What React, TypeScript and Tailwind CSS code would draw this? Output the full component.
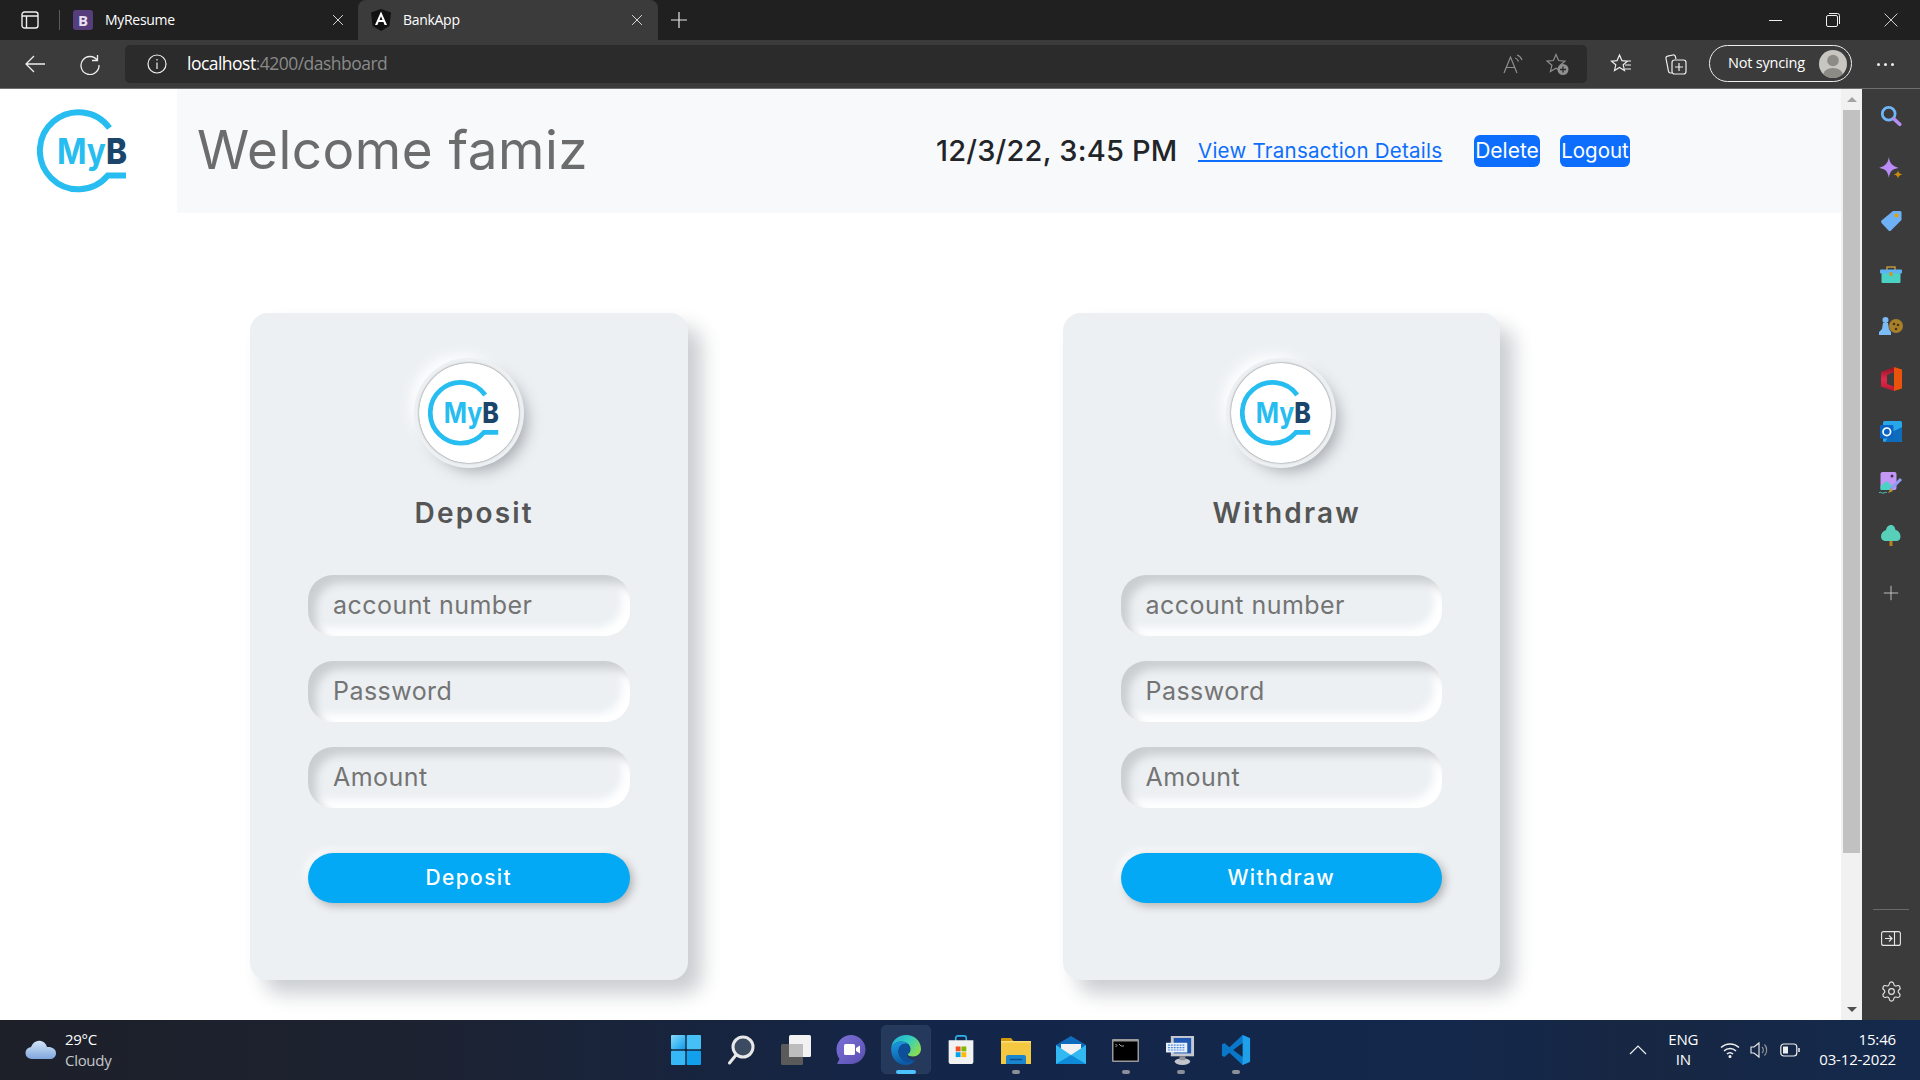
import React from "react";
import { Settings } from "lucide-react";

const SEGOE = "font-['Open_Sans','Noto_Sans',sans-serif]";
const POP = "font-['Inter','Liberation_Sans',sans-serif]";

function Logo({ className }: { className: string }) {
  return (
    <svg viewBox="0 0 90 90" className={className} fill="none">
      <path d="M72.5 19A38.5 38.5 0 1 0 70.8 66.5H89" stroke="#27bdf0" strokeWidth="6" />
      <text transform="translate(20 55) scale(.88 1)" x="0" y="0" fontSize="36" fontWeight="700" fontFamily="Inter">
        <tspan fill="#27bdf0">My</tspan>
        <tspan fill="#1b456b" fontWeight="800">B</tspan>
      </text>
    </svg>
  );
}

const Stroke = ({ children, size = 20, color = "#e8e8e8", sw = 1.3 }: { children: React.ReactNode; size?: number; color?: string; sw?: number }) => (
  <svg width={size} height={size} viewBox="0 0 20 20" fill="none" stroke={color} strokeWidth={sw}>{children}</svg>
);

function Tab({ active, icon, title, width, closeGap }: { active?: boolean; icon: React.ReactNode; title: string; width: string; closeGap: string }) {
  return (
    <div className={`flex h-10 shrink-0 items-center rounded-t-lg pl-[13px] ${width} ${active ? "bg-[#3b3b3b]" : ""}`}>
      <div className="flex w-5 justify-center">{icon}</div>
      <span className={`ml-[12px] flex-1 pb-[1px] text-[14px] tracking-[-0.3px] text-white ${SEGOE}`}>{title}</span>
      <span className={closeGap}>
        <Stroke size={14}><path d="M3 3l14 14M17 3L3 17" /></Stroke>
      </span>
    </div>
  );
}

function ToolBtn({ w, children }: { w: string; children: React.ReactNode }) {
  return <div className={`flex shrink-0 items-center justify-center ${w}`}>{children}</div>;
}

function BrowserChrome() {
  return (
    <>
      <div className="flex h-10 items-center bg-[#202020]">
        <div className="flex w-[59px] justify-center">
          <svg width="18" height="18" viewBox="0 0 18 18" fill="none" stroke="#eee" strokeWidth="1.4">
            <rect x="1" y="1" width="16" height="16" rx="2.5" />
            <path d="M1 5h16M5.5 5v12" />
          </svg>
        </div>
        <div className="h-[20px] w-px bg-[#5a5a5a]" />
        <Tab
          title="MyResume"
          width="w-[298px]"
          closeGap="mr-[13px]"
          icon={<div className={`flex h-5 w-5 items-center justify-center rounded-[3px] bg-[#563d7c] text-[15px] font-bold text-[#e8e0f0] ${SEGOE}`}>B</div>}
        />
        <Tab
          active
          title="BankApp"
          width="w-[300px]"
          closeGap="mr-[14px]"
          icon={
            <svg width="20" height="22" viewBox="0 0 20 22">
              <path d="M10 0L0 3.5 1.6 17 10 22l8.4-5L20 3.5z" fill="#111" />
              <path d="M10 2.5L4 16h2.4l1.2-3h4.8l1.2 3H16zM8.5 11L10 7.2 11.5 11z" fill="#fff" />
            </svg>
          }
        />
        <div className="ml-[11px]">
          <Stroke size={20} sw={1.2}><path d="M10 2v16M2 10h16" /></Stroke>
        </div>
        <div className="ml-auto flex items-center">
          <ToolBtn w="w-[57px]"><div className="h-px w-[13px] bg-[#eee]" /></ToolBtn>
          <ToolBtn w="w-[58px]">
            <svg width="14" height="14" viewBox="0 0 14 14" fill="none" stroke="#eee" strokeWidth="1">
              <rect x=".5" y="2.5" width="11" height="11" rx="1.5" />
              <path d="M3 .5h8.5a2 2 0 0 1 2 2V11" />
            </svg>
          </ToolBtn>
          <ToolBtn w="w-[58px]"><Stroke size={16} sw={1.1}><path d="M2 2l16 16M18 2L2 18" /></Stroke></ToolBtn>
        </div>
      </div>
      <div className="flex h-[49px] border-b border-[#6e6e6e] bg-[#3b3b3b] pt-[5px]">
        <div className="flex h-[38px] w-[125px] shrink-0 items-center">
          <ToolBtn w="w-[70px]">
            <svg width="22" height="22" viewBox="0 0 22 22" fill="none" stroke="#eee" strokeWidth="1.3">
              <path d="M21 11H2M10 3l-8 8 8 8" />
            </svg>
          </ToolBtn>
          <ToolBtn w="w-[40px]">
            <svg width="22" height="22" viewBox="0 0 22 22" fill="none" stroke="#eee" strokeWidth="1.3">
              <path d="M18.500 7.500A9 9 0 1 0 20 12M18.500 2v5.500H13" />
            </svg>
          </ToolBtn>
        </div>
        <div className="flex h-[38px] w-[1462px] shrink-0 items-center rounded-[5px] bg-[#2b2b2b]">
          <div className="flex w-[63px] justify-center">
            <svg width="20" height="20" viewBox="0 0 20 20" fill="none" stroke="#eee" strokeWidth="1.2">
              <circle cx="10" cy="10" r="9" />
              <path d="M10 8.5V15M10 5v1.6" />
            </svg>
          </div>
          <span className={`-ml-[1px] pb-[1px] text-[17.5px] tracking-[-0.52px] text-white ${SEGOE}`}>
            localhost<span className="text-[#8a8a8a]">:4200/dashboard</span>
          </span>
          <div className="ml-auto flex items-center pr-[7px]">
            <ToolBtn w="w-[45px]">
              <svg width="22" height="22" viewBox="0 0 22 22" fill="none" stroke="#8f8f8f" strokeWidth="1.2">
                <path d="M2 20L8.5 4 15 20M4.5 14.5h8M13 5a5 5 0 0 1 3.500 3.500M15 2a8 8 0 0 1 5 5" />
              </svg>
            </ToolBtn>
            <ToolBtn w="w-[45px]">
              <svg width="24" height="24" viewBox="0 0 24 24">
                <path d="M10 2.500l2.600 6 6.400.6-4.900 4.200 1.500 6.200L10 16.300l-5.600 3.200 1.500-6.200L1 9.100l6.400-.6z" fill="none" stroke="#8f8f8f" strokeWidth="1.200" />
                <circle cx="17" cy="17.500" r="5.500" fill="#8f8f8f" />
                <path d="M17 14.500v6M14 17.500h6" stroke="#2b2b2b" strokeWidth="1.300" />
              </svg>
            </ToolBtn>
          </div>
        </div>
        <ToolBtn w="w-[67px] h-[38px]">
          <svg width="22" height="22" viewBox="0 0 22 22" fill="none" stroke="#eee" strokeWidth="1.2">
            <path d="M9.5 2l2.4 5.6 5.6.5-4.3 3.700 1.300 5.600-5-3-5 3 1.300-5.600L1.500 8.100l5.600-.5zM15 8h6M15 12h6M15 16h6" />
          </svg>
        </ToolBtn>
        <ToolBtn w="w-[44px] h-[38px]">
          <svg width="22" height="22" viewBox="0 0 22 22" fill="none" stroke="#eee" strokeWidth="1.2">
            <path d="M7 20H5.500a2 2 0 0 1-2-1.600L1 5.500a2 2 0 0 1 1.600-2.300L8 2a2 2 0 0 1 2.400 1.600L11 6" />
            <rect x="7" y="7" width="14" height="14" rx="2.5" />
            <path d="M14 10v8M10 14h8" />
          </svg>
        </ToolBtn>
        <div className="w-[11px] shrink-0" />
        <div className="flex h-[37px] w-[143px] shrink-0 items-center rounded-full border border-[#eee] pl-[18px] pr-[4px]">
          <span className={`flex-1 pb-[1px] text-[14.500px] tracking-[-0.2px] text-white ${SEGOE}`}>Not syncing</span>
          <div className="flex h-7 w-7 items-center justify-center overflow-hidden rounded-full bg-[#c8c6c0]">
            <svg width="28" height="28" viewBox="0 0 28 28" fill="#8d8b85">
              <circle cx="14" cy="10.5" r="5.8" />
              <ellipse cx="14" cy="25" rx="10" ry="7" />
            </svg>
          </div>
        </div>
        <div className="flex h-[38px] w-[66px] items-center justify-center gap-[3px]">
          <i className="h-[3px] w-[3px] rounded-full bg-[#eee]" />
          <i className="ml-[1px] h-[3px] w-[3px] rounded-full bg-[#eee]" />
          <i className="ml-[1px] h-[3px] w-[3px] rounded-full bg-[#eee]" />
        </div>
      </div>
    </>
  );
}

function Card({ title }: { title: string }) {
  return (
    <div className="flex h-[667px] w-[437.5px] shrink-0 flex-col rounded-[18px] bg-[#ecf0f3] px-[58px] pt-[50px] shadow-[14px_14px_20px_#cbced1,-14px_-14px_20px_white]">
      <div className="mx-auto flex h-[100px] w-[100px] shrink-0 items-start rounded-full bg-white pl-[9px] pt-[17px] shadow-[0px_0px_2px_#5f5f5f,0px_0px_0px_5px_#ecf0f3,8px_8px_15px_#a7aaaf,-8px_-8px_15px_#ffffff]">
        <Logo className="h-[71px] w-[71px]" />
      </div>
      <div className={`mt-[29px] h-[42px] pl-[11px] text-center text-[28px] font-semibold leading-[42px] tracking-[2.2px] text-[#555] ${POP}`}>{title}</div>
      <div className="mt-[41px] flex flex-col gap-[25px]">
        {["account number", "Password", "Amount"].map((p) => (
          <input
            key={p}
            placeholder={p}
            className={`h-[61px] w-full rounded-[25px] bg-transparent pb-[2px] pl-[25px] text-[25px] tracking-[0.45px] outline-none shadow-[inset_8px_8px_8px_#cbced1,inset_-8px_-8px_8px_#ffffff] placeholder:text-[#747474] ${POP}`}
          />
        ))}
      </div>
      <button className={`mt-[45px] h-[50px] w-full shrink-0 rounded-[25px] bg-[#03a9f4] text-[21px] font-medium tracking-[1.4px] text-white shadow-[3px_3px_8px_#b1b1b1,-3px_-3px_8px_#ffffff] ${POP}`}>
        {title}
      </button>
    </div>
  );
}

function Page() {
  return (
    <div className="min-w-0 flex-1 bg-white">
      <div className="flex h-[124px] items-center">
        <div className="flex h-full w-[177px] shrink-0 items-start pl-[37px] pt-[20px]">
          <Logo className="h-[90px] w-[90px]" />
        </div>
        <div className={`flex h-full flex-1 items-center bg-[#f8f9fa] pl-[20px] ${POP}`}>
          <h1 className="w-[739px] shrink-0 text-[53px] font-normal tracking-[0.5px] text-[#6c6c6c]">Welcome famiz</h1>
          <span className="w-[262px] shrink-0 text-[29px] font-[450] tracking-[0.2px] text-[#212529]">12/3/22, 3:45 PM</span>
          <a className="w-[276px] shrink-0 text-[20.5px] tracking-[0.25px] text-[#0d6efd] underline">View Transaction Details</a>
          <span className="flex h-[32px] w-[66px] shrink-0 items-center justify-center rounded-[6px] bg-[#0d6efd] text-[21px] text-white">Delete</span>
          <span className="ml-[20px] flex h-[32px] w-[70px] shrink-0 items-center justify-center rounded-[6px] bg-[#0d6efd] text-[20.5px] text-white">Logout</span>
        </div>
      </div>
      <div className="flex gap-[375px] pl-[250px] pt-[100px]">
        <Card title="Deposit" />
        <Card title="Withdraw" />
      </div>
    </div>
  );
}

function Scrollbar() {
  return (
    <div className="flex w-[21px] shrink-0 flex-col items-center bg-[#f1f1f1]">
      <div className="flex h-[21px] items-center justify-center">
        <div className="h-0 w-0 border-x-[5px] border-b-[5px] border-x-transparent border-b-[#a3a3a3]" />
      </div>
      <div className="h-[743px] w-[17px] bg-[#c1c1c1]" />
      <div className="flex flex-1 items-end justify-center pb-[8px]">
        <div className="h-0 w-0 border-x-[5px] border-t-[5px] border-x-transparent border-t-[#505050]" />
      </div>
    </div>
  );
}

const sideIcons = [
  <svg key="s" width="22" height="22" viewBox="0 0 24 24" fill="none">
    <circle cx="9.500" cy="9.500" r="7" stroke="#6fb6f7" strokeWidth="3" />
    <path d="M15 15l6.500 6" stroke="#b58cf0" strokeWidth="4" strokeLinecap="round" />
  </svg>,
  <svg key="sp" width="26" height="26" viewBox="0 0 24 24">
    <path d="M10 1c1 6 3 8 9 10-6 1-8 3-9 9-1-6-3-8-9-9 6-2 8-4 9-10z" fill="#b98cf7" />
    <path d="M18.500 13c.4 2.500 1.200 3.300 4 4-2.800.7-3.600 1.500-4 4-.4-2.500-1.200-3.300-4-4 2.800-.7 3.600-1.500 4-4z" fill="#c98a10" />
  </svg>,
  <svg key="t" width="22" height="22" viewBox="0 0 22 22">
    <path d="M13 1h7a1.500 1.500 0 0 1 1.500 1.500V10L11 20.500a2 2 0 0 1-2.500 0L1.500 13a2 2 0 0 1 0-2.500z" fill="#6fb1f7" />
    <circle cx="16.500" cy="5.500" r="2" fill="#e8a100" />
  </svg>,
  <svg key="b" width="22" height="18" viewBox="0 0 22 18">
    <path d="M7 5V2h8v3" fill="none" stroke="#b9963c" strokeWidth="1.500" />
    <rect x="1.500" y="7" width="19" height="11" rx="1" fill="#4bd2c4" />
    <rect x="0" y="4.500" width="22" height="4" rx="1" fill="#5fb2f4" />
    <rect x="9.500" y="7" width="3" height="4" fill="#c59a2d" />
  </svg>,
  <svg key="c" width="24" height="20" viewBox="0 0 24 20">
    <circle cx="6.500" cy="4" r="3" fill="#7cbcf5" />
    <path d="M4 7h5l1 6 2 3v3H0v-3l3-3z" fill="#7cbcf5" />
    <circle cx="17" cy="10" r="7" fill="#a9802a" />
    <circle cx="15" cy="8" r="1.300" fill="#4a3511" />
    <circle cx="19" cy="9" r="1.300" fill="#4a3511" />
    <circle cx="17" cy="13" r="1.300" fill="#4a3511" />
  </svg>,
  <svg key="o" width="21" height="24" viewBox="0 0 21 24">
    <defs>
      <linearGradient id="of" x1="0" y1="0" x2="0" y2="1">
        <stop offset="0" stopColor="#8f1322" />
        <stop offset=".5" stopColor="#e02a4a" />
        <stop offset="1" stopColor="#c01530" />
      </linearGradient>
    </defs>
    <path d="M0 5L13 0v5L6 8v9l7 2.500V24L0 19.500z" fill="url(#of)" />
    <path d="M13 0l8 2.500v19L13 24z" fill="#e9530b" />
  </svg>,
  <svg key="ou" width="22" height="21" viewBox="0 0 22 21">
    <rect x="3" y="0" width="19" height="21" rx="1.500" fill="#28a8ea" />
    <path d="M12 11l10-5v13a2 2 0 0 1-2 2H5z" fill="#0f6cbd" />
    <rect x="0" y="4" width="13.500" height="13.500" rx="1" fill="#0a64c4" />
    <circle cx="6.800" cy="10.800" r="3.800" fill="none" stroke="#fff" strokeWidth="1.700" />
  </svg>,
  <svg key="i" width="24" height="24" viewBox="0 0 24 24">
    <rect x="1.500" y="0" width="16" height="18" rx="2" fill="#c597f5" />
    <path d="M1.500 14l6-5 6 5v4h-12z" fill="#4bd2c4" />
    <circle cx="13" cy="4" r="1.500" fill="#40305c" />
    <path d="M22 7L11 18" stroke="#8f9bf5" strokeWidth="3" />
    <path d="M12 16l-3 5 5-2z" fill="#c59a2d" />
    <path d="M0 21c2-2 3 1 5 0s2-1 3 0" fill="none" stroke="#4bd2c4" strokeWidth="1" />
  </svg>,
  <svg key="tr" width="20" height="22" viewBox="0 0 20 22">
    <rect x="8.500" y="15" width="3" height="6" fill="#b9801c" />
    <path d="M10 0c3 0 4 2.500 4.500 5 3 .5 5 3.500 5 6.500 0 3-2 4.500-4 4.500H4.500c-2 0-4.500-1.500-4.500-4.500S2 6 5 5c.5-2.500 2-5 5-5z" fill="#58cfb9" />
  </svg>,
];

function Sidebar() {
  return (
    <div className="flex w-[58px] shrink-0 flex-col items-center bg-[#3b3b3b] pt-[1px]">
      {sideIcons.map((ic, i) => (
        <div key={i} className="flex h-[52.5px] w-full items-center justify-center">{ic}</div>
      ))}
      <div className="mt-[4px] flex h-[53px] items-center justify-center">
        <Stroke size={16} sw={1} color="#ddd"><path d="M10 1v18M1 10h18" /></Stroke>
      </div>
      <div className="mt-auto h-px w-[36px] bg-[#6a6a6a]" />
      <div className="flex h-[60px] items-center justify-center pb-[3px]">
        <svg width="20" height="15" viewBox="0 0 20 15" fill="none" stroke="#e6e6e6" strokeWidth="1.100">
          <rect x=".6" y=".6" width="18.800" height="13.800" rx="2" />
          <path d="M13.500 .6v13.800M4 7.500h7M8 4.500l3 3-3 3" />
        </svg>
      </div>
      <div className="flex h-[50px] items-center justify-center pb-[8px]">
        <Settings size={23} strokeWidth={1.2} color="#e6e6e6" />
      </div>
    </div>
  );
}

const taskIcons: { el: React.ReactNode; dot?: boolean; active?: boolean }[] = [
  {
    el: (
      <svg width="30" height="30" viewBox="0 0 30 30">
        <defs>
          <linearGradient id="win" x1="0" y1="0" x2="1" y2="1">
            <stop offset="0" stopColor="#86dcfb" />
            <stop offset="1" stopColor="#0f9ceb" />
          </linearGradient>
        </defs>
        <rect x="0" y="0" width="14.300" height="14.300" rx="1" fill="url(#win)" />
        <rect x="15.700" y="0" width="14.300" height="14.300" rx="1" fill="#45c1f7" />
        <rect x="0" y="15.700" width="14.300" height="14.300" rx="1" fill="#35b8f5" />
        <rect x="15.700" y="15.700" width="14.300" height="14.300" rx="1" fill="#12a0ec" />
      </svg>
    ),
  },
  {
    el: (
      <svg width="28" height="30" viewBox="0 0 28 30" fill="none">
        <circle cx="16" cy="12" r="10" fill="#3c4a62" stroke="#e8e8e8" strokeWidth="3" />
        <path d="M9 20l-6.500 8" stroke="#e8e8e8" strokeWidth="3" strokeLinecap="round" />
      </svg>
    ),
  },
  {
    el: (
      <svg width="30" height="30" viewBox="0 0 30 30">
        <rect x="0" y="9" width="22" height="21" rx="1.500" fill="#5a5a5a" />
        <rect x="8" y="0" width="22" height="22" rx="1.500" fill="#f2f2f2" />
        <rect x="8" y="9" width="14" height="13" fill="#bdbdbd" />
      </svg>
    ),
  },
  {
    el: (
      <svg width="30" height="32" viewBox="0 0 30 32">
        <defs>
          <linearGradient id="chat" x1="0" y1="0" x2="1" y2="1">
            <stop offset="0" stopColor="#7b70d8" />
            <stop offset="1" stopColor="#5a4fb0" />
          </linearGradient>
        </defs>
        <path d="M15 1c8 0 14.500 6.500 14.500 14.500S23 30 15 30H1l2.500-5C1.500 22.500.5 19 .5 15.500.5 7.500 7 1 15 1z" fill="url(#chat)" />
        <rect x="8" y="10" width="11" height="11" rx="1.500" fill="#fff" />
        <path d="M20 14l4-2.500v8L20 17z" fill="#fff" />
      </svg>
    ),
  },
  {
    active: true,
    el: (
      <svg width="30" height="30" viewBox="0 0 30 30">
        <defs>
          <linearGradient id="eg" x1="0" y1="0" x2="1" y2=".6">
            <stop offset="0" stopColor="#1fa8dc" />
            <stop offset=".55" stopColor="#33cfc0" />
            <stop offset="1" stopColor="#86dc54" />
          </linearGradient>
          <linearGradient id="eb" x1="0" y1="0" x2=".3" y2="1">
            <stop offset="0" stopColor="#1b9de2" />
            <stop offset="1" stopColor="#0c59a4" />
          </linearGradient>
        </defs>
        <path d="M.2 13C1 5 7.500 0 15 0c8.500 0 15 6 15 14 0 4.500-3.500 7.500-8 7.500-2.500 0-5-.8-5.500-2 2-1.500 3-3 3-5.500 0-4-4.500-7.500-9.500-7.500C6 6.500 2 9 .2 13z" fill="url(#eg)" />
        <path d="M.2 13C2 9 6 6.500 10.500 6.500c2.500 0 5 1 6.500 2.500-5-1.500-10 2-9.500 8 .3 5 4.500 9.500 10 10 2 .2 5-.3 7-1.500-2.500 2.700-6 4.500-10 4.500C6 30 .2 23 .2 15z" fill="url(#eb)" />
        <path d="M7.500 17c-.5-6 4.500-9.500 9.500-8 1.200 1 2 2.500 2 5 0 2.500-1 4-2.500 5.500-1 .8-.5 2 1 3.500 1.500 1.500 4.500 2.500 7 2-2.500 2.200-5.500 2.300-7.500 2C11.500 26.500 8 22 7.500 17z" fill="#0e4f9a" />
      </svg>
    ),
  },
  {
    el: (
      <svg width="30" height="30" viewBox="0 0 30 34">
        <path d="M9 7V3.500C9 2 10 1 11.500 1h7C20 1 21 2 21 3.500V7" fill="none" stroke="#2eb2e8" strokeWidth="1.800" />
        <path d="M1 6h28v24a3 3 0 0 1-3 3H4a3 3 0 0 1-3-3z" fill="#f2f2f2" />
        <rect x="9" y="13" width="5.500" height="5.500" fill="#f25022" />
        <rect x="15.500" y="13" width="5.500" height="5.500" fill="#7fba00" />
        <rect x="9" y="19.500" width="5.500" height="5.500" fill="#00a4ef" />
        <rect x="15.500" y="19.500" width="5.500" height="5.500" fill="#ffb900" />
      </svg>
    ),
  },
  {
    dot: true,
    el: (
      <svg width="30" height="27" viewBox="0 0 30 27">
        <path d="M0 2a1 1 0 0 1 1-1h9l3 3.500H0z" fill="#d49a0b" />
        <rect x="0" y="4" width="30" height="23" fill="#f5c842" />
        <path d="M0 4h30v1.500H0z" fill="#fbe07a" />
        <path d="M5 27v-7a2 2 0 0 1 2-2h16a2 2 0 0 1 2 2v7z" fill="#1a86d0" />
        <path d="M9 22.500h12" stroke="#0d4f8a" strokeWidth="1.500" />
      </svg>
    ),
  },
  {
    el: (
      <svg width="30" height="28" viewBox="0 0 30 28">
        <path d="M0 9L15 0l15 9v19H0z" fill="#0f6cbd" />
        <path d="M5 8h20v7l-10 6-10-6z" fill="#f2f2f2" />
        <path d="M0 9l15 10 15-10v19H0z" fill="#32b9f1" />
        <path d="M0 28l15-9 15 9z" fill="#0f8ad8" />
      </svg>
    ),
  },
  {
    dot: true,
    el: (
      <svg width="27" height="23" viewBox="0 0 27 23">
        <rect x="0" y="0" width="27" height="23" rx="1" fill="#9a9a9a" />
        <rect x="1.500" y="2.500" width="24" height="19" fill="#000" />
        <path d="M3.500 5l1.500 1.500-1.500 1.500" fill="none" stroke="#ccc" strokeWidth=".8" />
        <path d="M7 5l2 2M9 7h3" stroke="#ccc" strokeWidth=".8" />
      </svg>
    ),
  },
  {
    dot: true,
    el: (
      <svg width="29" height="29" viewBox="0 0 30 30">
        <rect x="5" y="0" width="24" height="21" fill="#c5c9cf" />
        <rect x="8" y="2" width="18" height="16" fill="#1f57b3" />
        <rect x="0" y="7" width="22" height="10" fill="#e8f0fa" />
        <path d="M2 9.500h18M2 12h18M2 14.500h18" stroke="#4b86d8" strokeWidth="1.200" strokeDasharray="2 1" />
        <ellipse cx="17" cy="26.500" rx="8" ry="3.500" fill="#c2c6cc" />
        <rect x="14" y="21" width="6" height="4" fill="#8d9096" />
      </svg>
    ),
  },
  {
    dot: true,
    el: (
      <svg width="30" height="30" viewBox="0 0 30 32">
        <path d="M22 0l8 3.500v25L22 32 8 19 2.500 23.500 0 22V10l2.500-1.500L8 13z" fill="#0a78c8" />
        <path d="M22 0l8 3.500v25L22 32z" fill="#1fa0e8" />
        <path d="M22 8.500L12 16l10 7.500z" fill="#122848" />
      </svg>
    ),
  },
];

function Taskbar() {
  return (
    <div className={`flex h-[60px] items-center bg-[linear-gradient(90deg,#1d2029_0%,#1d2230_20%,#13264a_50%,#14284c_75%,#172743_85%,#14294c_100%)] text-white ${SEGOE}`}>
      <div className="flex w-[658px] shrink-0 items-center pl-[25px]">
        <svg width="32" height="20" viewBox="0 0 32 20">
          <defs>
            <linearGradient id="cl" x1="0" y1="0" x2="0" y2="1">
              <stop offset="0" stopColor="#d5e5f8" />
              <stop offset="1" stopColor="#7fa6dd" />
            </linearGradient>
          </defs>
          <path d="M7 19a6 6 0 0 1-1-12C8 2 12 0 16 1c3 .5 5 3 6 6 5-.5 9 2 9 6s-3 6-6 6z" fill="url(#cl)" />
        </svg>
        <div className="ml-[8px] flex flex-col text-[15px] leading-[21px] tracking-[-0.3px]">
          <span>29°C</span>
          <span className="text-[#c5c7ca]">Cloudy</span>
        </div>
      </div>
      <div className="flex shrink-0 items-center">
        {taskIcons.map((t, i) => (
          <div key={i} className="relative flex h-[60px] w-[55px] items-center justify-center">
            {t.active && <div className="absolute bottom-[6px] left-[3px] right-[2px] top-[5px] rounded-[5px] border border-[#2a3c5c] bg-[#24395c]" />}
            <div className="relative flex items-center justify-center">{t.el}</div>
            {(t.active || t.dot) && (
              <div className={`absolute bottom-[6px] h-[4px] rounded-full ${t.active ? "w-[20px] bg-[#4cc2ff]" : "w-[8px] bg-[#8a8f98]"}`} />
            )}
          </div>
        ))}
      </div>
      <div className="ml-auto flex items-center pr-[24px]">
        <svg width="18" height="10" viewBox="0 0 18 10" fill="none" stroke="#eee" strokeWidth="1.200">
          <path d="M1 9l8-8 8 8" />
        </svg>
        <div className="ml-[21px] flex flex-col items-center pb-[2px] text-[15px] leading-[20px] tracking-[-0.2px]">
          <span>ENG</span>
          <span>IN</span>
        </div>
        <div className="ml-[22px]">
          <svg width="20" height="16" viewBox="0 0 20 16" fill="none" stroke="#eee" strokeWidth="1.500">
            <path d="M1 5.500a13 13 0 0 1 18 0M4 9a8.500 8.500 0 0 1 12 0M7 12a4 4 0 0 1 6 0" />
            <circle cx="10" cy="14.500" r=".8" fill="#eee" />
          </svg>
        </div>
        <div className="ml-[10px]">
          <svg width="20" height="18" viewBox="0 0 20 18" fill="none" stroke="#eee" strokeWidth="1.100">
            <path d="M1 6v6h3l5 4V2L4 6z" />
            <path d="M12 6a4 4 0 0 1 0 6M14.500 3.500a8 8 0 0 1 0 11" stroke="#999" />
          </svg>
        </div>
        <div className="ml-[10px]">
          <svg width="20" height="14" viewBox="0 0 20 14" fill="none" stroke="#eee" strokeWidth="1.200">
            <rect x=".8" y="1" width="16" height="12" rx="3" />
            <rect x="3" y="3.500" width="5" height="7" fill="#eee" stroke="none" />
            <path d="M19 5v4" strokeWidth="1.500" />
          </svg>
        </div>
        <div className="ml-[19px] flex flex-col items-end pb-[2px] text-[15px] leading-[20px] tracking-[-0.15px]">
          <span>15:46</span>
          <span>03-12-2022</span>
        </div>
      </div>
    </div>
  );
}

export default function App() {
  return (
    <div className="flex h-[1080px] w-[1920px] flex-col overflow-hidden bg-white">
      <BrowserChrome />
      <div className="flex h-[931px] min-h-0 overflow-hidden">
        <Page />
        <Scrollbar />
        <Sidebar />
      </div>
      <Taskbar />
    </div>
  );
}
